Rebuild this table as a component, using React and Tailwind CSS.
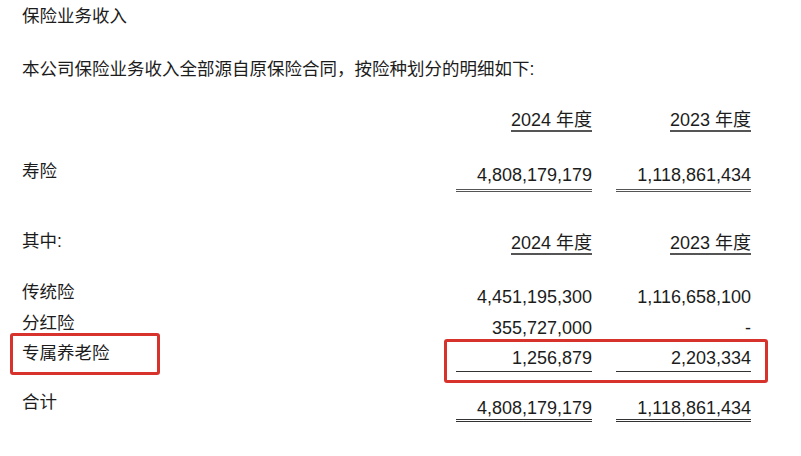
const font = { fontFamily: '"Liberation Sans", "Noto Sans CJK SC", sans-serif' };

function HeaderRow({ label, className }) {
  return (
    <div className={`grid grid-cols-[410px_136px_135px] gap-x-6 ${className}`}>
      <div className="text-[17.5px] leading-[22px] -mt-[2px]">{label}</div>
      <div className="text-right">
        <span className="inline-block text-[18px] leading-[20px] border-b-2 border-[#555]">2024 年度</span>
      </div>
      <div className="text-right">
        <span className="inline-block text-[18px] leading-[20px] border-b-2 border-[#555]">2023 年度</span>
      </div>
    </div>
  );
}

function Row({ label, a, b, line, labelShift = '-mt-[5px]', className }) {
  const lines = {
    none: '',
    single: 'pb-[2px] border-b border-[#333]',
    double: 'pb-[3px] border-b-[3px] border-double border-[#555]',
    doubleTight: 'border-b-[3px] border-double border-[#333]',
  };
  return (
    <div className={`grid grid-cols-[410px_136px_135px] gap-x-6 items-start ${className}`}>
      <div className={`text-[17.5px] leading-[22px] ${labelShift}`}>{label}</div>
      <div className={`text-right text-[18px] leading-[22px] ${lines[line]}`}>{a}</div>
      <div className={`text-right text-[18px] leading-[22px] ${lines[line]}`}>{b}</div>
    </div>
  );
}

export default function App() {
  return (
    <div style={font} className="relative w-[801px] h-[456px] overflow-hidden bg-white pl-[22px] pr-[50px] pt-[5px] text-[#1c1c1c]">
      <div className="text-[17.5px] leading-[22px]">保险业务收入</div>
      <div className="mt-[31px] text-[17.5px] leading-[22px]">
        本公司保险业务收入全部源自原保险合同，按险种划分的明细如下:
      </div>

      <HeaderRow label="" className="mt-[29px]" />
      <Row label="寿险" a="4,808,179,179" b="1,118,861,434" line="double" labelShift="-mt-[4px]" className="mt-[31px]" />

      <HeaderRow label="其中:" className="mt-[40px]" />
      <Row label="传统险" a="4,451,195,300" b="1,116,658,100" line="none" className="mt-[30px]" />
      <Row label="分红险" a="355,727,000" b="-" line="none" className="mt-[9px]" />
      <Row label="专属养老险" a="1,256,879" b="2,203,334" line="single" className="mt-[8px]" />
      <Row label="合计" a="4,808,179,179" b="1,118,861,434" line="doubleTight" labelShift="-mt-[6px]" className="mt-[25px]" />

      {/* red highlight boxes */}
      <div className="absolute left-[10px] top-[333px] w-[150px] h-[42px] border-[3px] border-[#d8322c] rounded-[3px]" />
      <div className="absolute left-[444px] top-[339px] w-[324px] h-[44px] border-[3px] border-[#d8322c] rounded-[3px]" />
    </div>
  );
}
